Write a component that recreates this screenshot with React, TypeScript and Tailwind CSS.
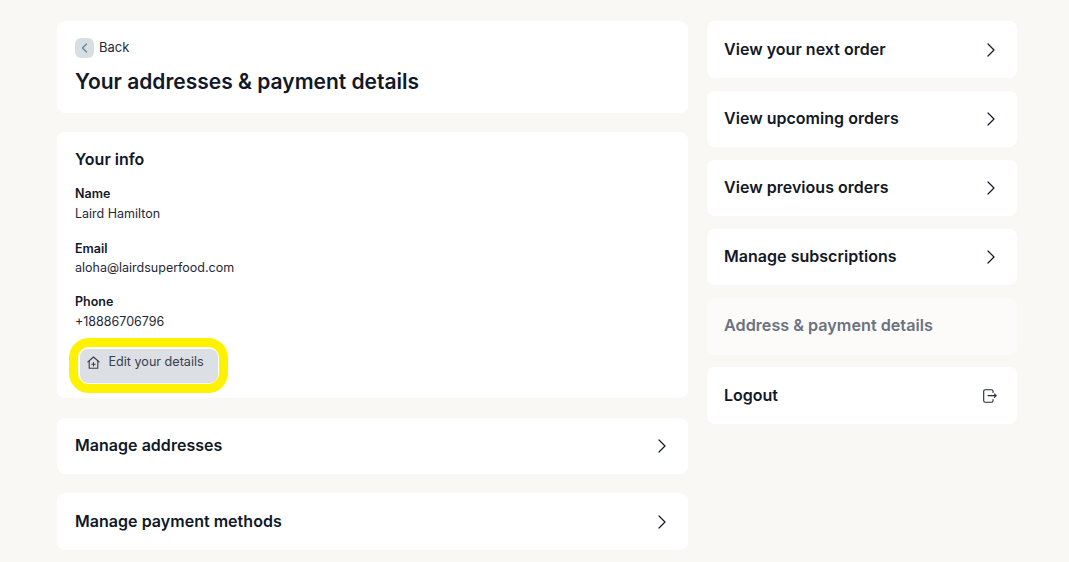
const sideLinks = [
  { label: "View your next order", height: "h-[57px]" },
  { label: "View upcoming orders", height: "h-[56px]" },
  { label: "View previous orders", height: "h-[56px]" },
  { label: "Manage subscriptions", height: "h-[56px]" },
];

function Chevron() {
  return (
    <svg width="8" height="14" viewBox="0 0 8 14" fill="none" stroke="#111827" strokeWidth="1.2" strokeLinecap="round" strokeLinejoin="round">
      <path d="M1 1l6 6-6 6" />
    </svg>
  );
}

function HomePlus() {
  return (
    <svg width="13" height="13" viewBox="0 0 13 13" fill="none" stroke="#374151" strokeWidth="1.1" strokeLinecap="round" strokeLinejoin="round">
      <path d="M.8 6 6.5 1l5.7 5" />
      <path d="M2.2 5.2v7h8.6v-7" />
      <path d="M6.5 6.6v3.4M4.8 8.3h3.4" />
    </svg>
  );
}

function LogoutIcon() {
  return (
    <svg width="14" height="14" viewBox="0 0 14 14" fill="none" stroke="#1f2937" strokeWidth="1.1" strokeLinecap="round" strokeLinejoin="round">
      <path d="M10 3.4V2.2A1.5 1.5 0 0 0 8.5.7H2.2A1.5 1.5 0 0 0 .7 2.2v9.6a1.5 1.5 0 0 0 1.5 1.5h6.3a1.5 1.5 0 0 0 1.5-1.5v-1.2" />
      <path d="M5 6.6h8.2M11.4 4.9l1.8 1.7-1.8 1.7" />
    </svg>
  );
}

function RowCard({ label, className }: { label: string; className: string }) {
  return (
    <div className={`flex items-center justify-between rounded-lg bg-white pr-[22px] ${className}`}>
      <span className="pb-[2px] text-[16px] font-semibold text-[#111827] tracking-[0.03px]">{label}</span>
      <Chevron />
    </div>
  );
}

function Field({ label, value, className }: { label: string; value: string; className: string }) {
  return (
    <div className={className}>
      <div className="text-[12.5px] leading-[18px] font-semibold text-[#111827]">{label}</div>
      <div className="mt-[1.5px] text-[12.5px] leading-[18px] text-[#1f2937]">{value}</div>
    </div>
  );
}

export default function App() {
  return (
    <div className="h-[562px] overflow-hidden bg-[#f9f8f5] font-['Inter',sans-serif]">
      <div className="flex gap-[19px] pl-[57px] pt-[21px]">
        <div className="flex w-[631px] flex-col">
          {/* Header */}
          <div className="h-[92px] rounded-lg bg-white pl-[18px] pr-[17px] pt-[17px]">
            <div className="flex items-center gap-[5px]">
              <span className="flex h-[20px] w-[19px] items-center justify-center rounded-md bg-[#d9dee3]">
                <svg width="7" height="10" viewBox="0 0 7 10" fill="none" stroke="#5f84a0" strokeWidth="1.2" strokeLinecap="round" strokeLinejoin="round">
                  <path d="M5.5 1 1.5 5l4 4" />
                </svg>
              </span>
              <span className="text-[13px] text-[#1f2937]">Back</span>
            </div>
            <h1 className="mt-[10px] text-[21px] leading-[28px] font-semibold text-[#111827]">
              Your addresses &amp; payment details
            </h1>
          </div>

          {/* Info */}
          <div className="mt-[19px] h-[266px] rounded-lg bg-white pl-[18px] pr-[17px] pt-[16px]">
            <h2 className="text-[16px] leading-[22px] font-semibold text-[#111827]">Your info</h2>
            <Field label="Name" value="Laird Hamilton" className="mt-[15px]" />
            <Field label="Email" value="aloha@lairdsuperfood.com" className="mt-[17px]" />
            <Field label="Phone" value="+18886706796" className="mt-[16px]" />
            <div className="-ml-[6px] mt-[7.5px] w-fit rounded-[20px] border-[9px] border-[#fff200] bg-white p-[1.5px]">
              <div className="flex h-[34px] w-[138px] items-center gap-[9px] rounded-lg bg-[#dcdfe3] pb-[6px] pl-[7px]">
                <HomePlus />
                <span className="text-[12.6px] text-[#374151]">Edit your details</span>
              </div>
            </div>
          </div>

          <RowCard label="Manage addresses" className="mt-[20px] h-[56px] pl-[18px]" />
          <RowCard label="Manage payment methods" className="mt-[19px] h-[57px] pl-[18px]" />
        </div>

        <div className="flex w-[310px] flex-col gap-[13px]">
          {sideLinks.map((link) => (
            <RowCard key={link.label} label={link.label} className={`${link.height} pl-[17px]`} />
          ))}
          <div className="flex h-[57px] items-center rounded-lg bg-[#fcfbf9] pl-[17px]">
            <span className="pb-[2px] text-[16.2px] font-semibold text-[#6b7280]">Address &amp; payment details</span>
          </div>
          <div className="-mt-[1px] flex h-[57px] items-center justify-between rounded-lg bg-white pl-[17px] pr-[20px]">
            <span className="pb-[2px] text-[16px] font-semibold text-[#111827]">Logout</span>
            <LogoutIcon />
          </div>
        </div>
      </div>
    </div>
  );
}
